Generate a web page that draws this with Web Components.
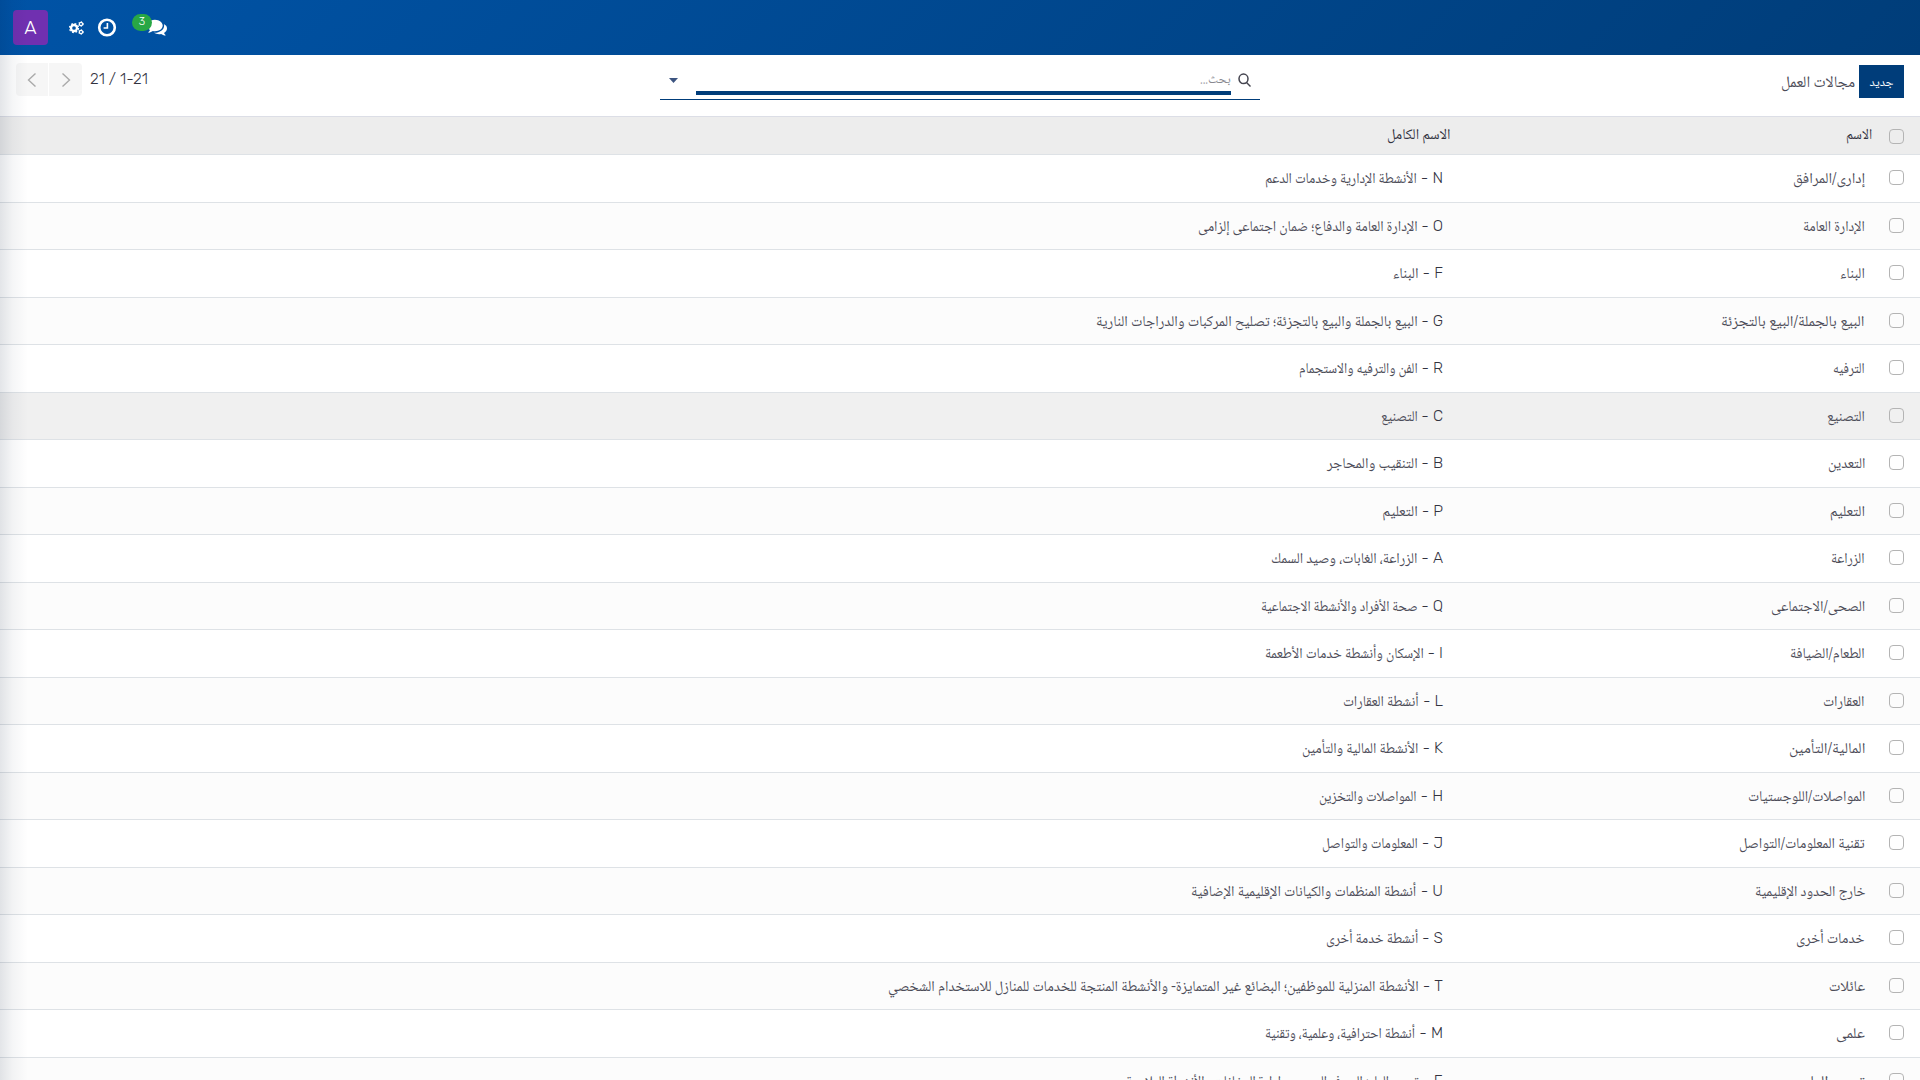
<!DOCTYPE html>
<html lang="ar">
<head>
<meta charset="UTF-8">
<title>مجالات العمل</title>
<style>
    body {
        margin: 0;
        height: 1080px;
        overflow: hidden;
        background: #fff;
        color: #4c4c58;
        font-family: Rubik, Roboto, sans-serif;
        font-size: 16px;
    }
</style>
</head>
<body>
<work-app></work-app>
<script>
// Arabic text squeezed to a given width, anchored on its right edge
class FitText extends HTMLElement {
    connectedCallback() {
        this.attachShadow({ mode: 'open' });
        this.shadowRoot.innerHTML = `
        <style>
            :host {
                display: inline-block;
                direction: rtl;
                white-space: nowrap;
                font-family: "Noto Naskh Arabic", "DejaVu Sans", sans-serif;
                transform-origin: right center;
            }
        </style>
        <slot></slot>`;
        const target = Number(this.getAttribute('width'));
        const natural = this.offsetWidth;
        if (target && natural) {
            this.style.transform = `scaleX(${target / natural})`;
            this.style.marginLeft = `${target - natural}px`;
        }
    }
}

class TopBar extends HTMLElement {
    connectedCallback() {
        this.attachShadow({ mode: 'open' });
        this.shadowRoot.innerHTML = `
        <style>
            :host {
                display: flex;
                align-items: center;
                height: 55px;
                box-sizing: border-box;
                padding-left: 13px;
                background: linear-gradient(135deg, #0053a6, #003d79);
                color: #fff;
            }
            .avatar {
                width: 35px;
                height: 35px;
                border-radius: 4px;
                background: #7030b0;
                font-size: 19px;
                font-weight: 300;
                line-height: 36px;
                text-align: center;
            }
            svg { display: block; fill: #fff; }
            .cogs { margin-left: 21px; }
            .clock { margin-left: 13px; }
            .chat {
                position: relative;
                margin: -2px 0 0 30px;
            }
            .badge {
                position: absolute;
                left: -15px;
                top: -3px;
                width: 20px;
                height: 17px;
                border-radius: 9px;
                background: #28a745;
                font-size: 11px;
                font-weight: 300;
                line-height: 15px;
                text-align: center;
            }
        </style>
        <div class="avatar">A</div>
        <svg class="cogs" width="15" height="14" viewBox="0 0 15 14">
            <g fill="none" stroke="#fff">
                <circle cx="5" cy="7" r="3" stroke-width="2.3"/>
                <circle cx="5" cy="7" r="4.5" stroke-width="1.3" stroke-dasharray="1.8 1.734"/>
                <circle cx="12" cy="3" r="1.6" stroke-width="1.2"/>
                <circle cx="12" cy="3" r="2.4" stroke-width=".9" stroke-dasharray="1.2 1.313"/>
                <circle cx="12" cy="11" r="1.6" stroke-width="1.2"/>
                <circle cx="12" cy="11" r="2.4" stroke-width=".9" stroke-dasharray="1.2 1.313"/>
            </g>
        </svg>
        <svg class="clock" width="20" height="20" viewBox="0 0 20 20">
            <circle cx="10" cy="9.500" r="7.800" fill="none" stroke="#fff" stroke-width="2.600"/>
            <path d="M9.600 5h1.600v5.800H6.600V9.200h3z"/>
        </svg>
        <div class="chat">
            <svg width="20" height="20" viewBox="0 0 1792 1792"><path d="M1408 768q0 139-94 257t-256.500 186.500T704 1280q-86 0-176-16-124 88-278 128-36 9-86 16h-3q-11 0-20.500-8T129 1379q-1-3-1-6.500t.5-6.500 2-6l2.500-5 3.500-5.500 4-5 4.500-5 4-4.500q5-6 23-25t26-29.500 22.500-29 25-38.500 20.500-44q-124-72-195-177T0 768q0-139 94-257t256.500-186.500T704 256t353.500 68.500T1314 511t94 257zm384 256q0 120-71 224.500T1526 1425q10 24 20.500 44t25 38.500 22.500 29 26 29.500 23 25q1 1 4 4.500t4.500 5 4 5 3.500 5.500l2.500 5 2 6 .5 6.500-1 6.500q-3 14-13 22t-22 7q-50-7-86-16-154-40-278-128-90 16-176 16-271 0-472-132 58 4 88 4 161 0 309-45t264-129q125-92 192-212t67-254q0-77-23-152 129 71 204 178t75 230z"/></svg>
            <span class="badge">3</span>
        </div>`;
    }
}

class ControlPanel extends HTMLElement {
    connectedCallback() {
        this.attachShadow({ mode: 'open' });
        this.shadowRoot.innerHTML = `
        <style>
            :host {
                display: grid;
                grid-template-columns: 660px 600px 1fr;
                height: 61px;
                box-sizing: border-box;
                padding-right: 16px;
            }
            .pager {
                display: flex;
                gap: 1px;
                padding: 8px 0 0 16px;
            }
            .pager i {
                display: flex;
                align-items: center;
                justify-content: center;
                width: 32px;
                height: 33px;
                background: #f6f6f6;
                border-radius: 4px 0 0 4px;
            }
            .pager i + i { width: 33px; border-radius: 0 4px 4px 0; }
            .pager svg { fill: none; stroke: #aaa; stroke-width: 1.4; }
            .count {
                margin-left: 7px;
                font-size: 15.500px;
                font-weight: 300;
                line-height: 32px;
                color: #33333f;
            }
            .search {
                display: flex;
                justify-content: space-between;
                height: 45px;
                box-sizing: border-box;
                border-bottom: 1px solid #003d7a;
            }
            .caret {
                width: 9px;
                height: 5px;
                margin: 23px 0 0 9px;
                background: #3c5480;
                clip-path: polygon(0 0, 100% 0, 50% 100%);
            }
            .input {
                width: 535px;
                height: 36px;
                margin: 4px 7px 0 17px;
                box-sizing: border-box;
                border-bottom: 4px solid #003d7a;
                text-align: right;
                font-size: 12.5px;
                line-height: 40px;
                color: #88888f;
            }
            .lens { margin: 18px 9px 0 0; }
            .title {
                display: flex;
                justify-content: flex-end;
                gap: 4px;
                padding-top: 10px;
            }
            .title > fit-text { line-height: 38px; }
            .new {
                width: 45px;
                height: 33px;
                background: #003d7a;
                color: #fff;
                font-size: 12.5px;
                line-height: 34px;
                text-align: center;
            }
        </style>
        <div class="pager">
            <i><svg width="10" height="14" viewBox="0 0 10 14"><path d="M8.500 .5l-7 6.500 7 6.500"/></svg></i>
            <i><svg width="10" height="14" viewBox="0 0 10 14"><path d="M1.500 .5l7 6.500-7 6.500"/></svg></i>
            <span class="count">21 / 1-21</span>
        </div>
        <div class="search">
            <span class="caret"></span>
            <div class="input"><fit-text width="31">بحث...</fit-text></div>
            <svg class="lens" width="13" height="15" viewBox="0 0 13 15" fill="none" stroke="#44444f" stroke-width="1.5">
                <ellipse cx="5.500" cy="5.800" rx="4.500" ry="4.800"/><path d="M8.500 9.500l4 4"/>
            </svg>
        </div>
        <div class="title">
            <fit-text width="74">مجالات العمل</fit-text>
            <div class="new"><fit-text width="24">جديد</fit-text></div>
        </div>`;
    }
}

class CheckBox extends HTMLElement {
    connectedCallback() {
        this.attachShadow({ mode: 'open' });
        this.shadowRoot.innerHTML = `
        <style>
            :host {
                display: block;
                width: 15px;
                height: 15px;
                box-sizing: border-box;
                border: 1px solid #b4b4b4;
                border-radius: 4px;
            }
        </style>`;
    }
}

class ListRow extends HTMLElement {
    connectedCallback() {
        this.attachShadow({ mode: 'open' });
        this.shadowRoot.innerHTML = `
        <style>
            :host {
                display: grid;
                grid-template-columns: 1443px 422px 39px;
                box-sizing: border-box;
                height: 48px;
                border-bottom: 1px solid #dee2e6;
                font-size: 15px;
                line-height: 46px;
                text-align: right;
            }
            check-box { margin: 15px 0 0 24px; }
            :host([head]) {
                grid-template-columns: 1451px 421px 32px;
                height: 39px;
                border-top: 1px solid #dcdee6;
                background: #ededed;
                color: #33333f;
                line-height: 39px;
            }
            :host([head]) check-box { margin: 12px 0 0 17px; }
        </style>
        <slot name="full"></slot>
        <slot name="name"></slot>
        <check-box></check-box>`;
    }
}

class WorkList extends HTMLElement {
    connectedCallback() {
        // name, left edge of the name, code, full name, left edge of the full name
        const rows = [
            ['إدارى/المرافق', 1793, 'N', 'الأنشطة الإدارية وخدمات الدعم', 1265],
            ['الإدارة العامة', 1803, 'O', 'الإدارة العامة والدفاع؛ ضمان اجتماعى إلزامى', 1197],
            ['البناء', 1840, 'F', 'البناء', 1393],
            ['البيع بالجملة/البيع بالتجزئة', 1721, 'G', 'البيع بالجملة والبيع بالتجزئة؛ تصليح المركبات والدراجات النارية', 1095],
            ['الترفيه', 1833, 'R', 'الفن والترفيه والاستجمام', 1299],
            ['التصنيع', 1827, 'C', 'التصنيع', 1380],
            ['التعدين', 1828, 'B', 'التنقيب والمحاجر', 1326],
            ['التعليم', 1830, 'P', 'التعليم', 1383],
            ['الزراعة', 1831, 'A', 'الزراعة، الغابات، وصيد السمك', 1271],
            ['الصحى/الاجتماعى', 1771, 'Q', 'صحة الأفراد والأنشطة الاجتماعية', 1260],
            ['الطعام/الضيافة', 1790, 'I', 'الإسكان وأنشطة خدمات الأطعمة', 1265],
            ['العقارات', 1823, 'L', 'أنشطة العقارات', 1343],
            ['المالية/التأمين', 1789, 'K', 'الأنشطة المالية والتأمين', 1303],
            ['المواصلات/اللوجستيات', 1748, 'H', 'المواصلات والتخزين', 1319],
            ['تقنية المعلومات/التواصل', 1739, 'J', 'المعلومات والتواصل', 1322],
            ['خارج الحدود الإقليمية', 1755, 'U', 'أنشطة المنظمات والكيانات الإقليمية الإضافية', 1192],
            ['خدمات أخرى', 1796, 'S', 'أنشطة خدمة أخرى', 1326],
            ['عائلات', 1829, 'T', 'الأنشطة المنزلية للموظفين؛ البضائع غير المتمايزة- والأنشطة المنتجة للخدمات للمنازل للاستخدام الشخصي', 888],
            ['علمى', 1836, 'M', 'أنشطة احترافية، وعلمية، وتقنية', 1265],
            ['توريد الماء', 1803, 'E', 'توريد الماء؛ الصرف الصحي، وإدارة المخلفات والأنشطة العلاجية', 1125]
        ];
        this.attachShadow({ mode: 'open' });
        this.shadowRoot.innerHTML = `
        <style>
            :host { display: block; }
            list-row:nth-of-type(odd) { height: 47px; background: #fcfcfc; }
            list-row:nth-of-type(even) { background: #fff; }
            list-row[head] { height: 39px; background: #ededed; }
            list-row.hover { background: #f0f0f0; }
            .full {
                display: flex;
                justify-content: flex-end;
                align-items: baseline;
                white-space: pre;
            }
            .code { direction: rtl; font-size: 15.5px; font-weight: 300; color: #33333f; }
        </style>
        <list-row head>
            <fit-text slot="full" width="64" style="justify-self:end">الاسم الكامل</fit-text>
            <fit-text slot="name" width="26" style="justify-self:end">الاسم</fit-text>
        </list-row>
        ${rows.map(r => `
        <list-row${r[2] === 'C' ? ' class="hover"' : ''}>
            <div slot="full" class="full"><fit-text data-left="${r[4]}">${r[3]}</fit-text><span class="code">${r[2]} - </span></div>
            <div slot="name"><fit-text width="${1865 - r[1]}">${r[0]}</fit-text></div>
        </list-row>`).join('')}`;
        this.shadowRoot.querySelectorAll('fit-text[data-left]').forEach(text => {
            const code = text.nextElementSibling.offsetWidth;
            const target = 1443 - code - text.dataset.left;
            const natural = text.offsetWidth;
            text.style.transform = `scaleX(${target / natural})`;
        });
    }
}

class WorkApp extends HTMLElement {
    connectedCallback() {
        this.attachShadow({ mode: 'open' });
        this.shadowRoot.innerHTML = `
        <style>
            :host {
                display: block;
                position: relative;
                width: 1920px;
                height: 1080px;
                overflow: hidden;
            }
            .edge {
                position: absolute;
                left: 0;
                top: 0;
                width: 28px;
                height: 100%;
                background: linear-gradient(90deg, rgba(0, 20, 50, .11), rgba(0, 20, 50, .04) 45%, transparent);
            }
        </style>
        <top-bar></top-bar>
        <control-panel></control-panel>
        <work-list></work-list>
        <div class="edge"></div>`;
    }
}

customElements.define('fit-text', FitText);
customElements.define('check-box', CheckBox);
customElements.define('top-bar', TopBar);
customElements.define('control-panel', ControlPanel);
customElements.define('list-row', ListRow);
customElements.define('work-list', WorkList);
customElements.define('work-app', WorkApp);
</script>
</body>
</html>
